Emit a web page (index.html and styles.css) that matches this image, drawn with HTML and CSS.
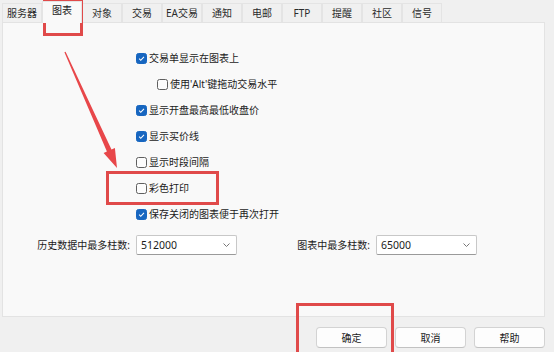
FILE: index.html
```html
<!DOCTYPE html>
<html>
<head>
    <meta charset="utf-8" />
    <title>图表设置</title>
    <link rel="stylesheet" href="styles.css">
</head>
<body>
    <section class="window">
        <nav class="tabs">
            <span class="tab">服务器</span>
            <span class="tab active">图表</span>
            <span class="tab">对象</span>
            <span class="tab">交易</span>
            <span class="tab">EA交易</span>
            <span class="tab">通知</span>
            <span class="tab">电邮</span>
            <span class="tab">FTP</span>
            <span class="tab">提醒</span>
            <span class="tab">社区</span>
            <span class="tab">信号</span>
        </nav>
        <section class="panel">
            <div class="options">
                <label class="row"><span class="box checked"><svg viewBox="0 0 11 11"><path d="M2.6 5.7 L4.6 7.7 L8.5 3.6" /></svg></span>交易单显示在图表上</label>
                <label class="row sub"><span class="box"></span>使用'Alt'键拖动交易水平</label>
                <label class="row"><span class="box checked"><svg viewBox="0 0 11 11"><path d="M2.6 5.7 L4.6 7.7 L8.5 3.6" /></svg></span>显示开盘最高最低收盘价</label>
                <label class="row"><span class="box checked"><svg viewBox="0 0 11 11"><path d="M2.6 5.7 L4.6 7.7 L8.5 3.6" /></svg></span>显示买价线</label>
                <label class="row"><span class="box"></span>显示时段间隔</label>
                <label class="row"><span class="box"></span>彩色打印</label>
                <label class="row"><span class="box checked"><svg viewBox="0 0 11 11"><path d="M2.6 5.7 L4.6 7.7 L8.5 3.6" /></svg></span>保存关闭的图表便于再次打开</label>
            </div>
            <div class="fields">
                <div class="field">
                    <span class="field-label wide">历史数据中最多柱数:</span>
                    <div class="combo">512000<svg viewBox="0 0 7 4"><path d="M0.5 0.5 L3.5 3.5 L6.5 0.5" /></svg></div>
                </div>
                <div class="field second">
                    <span class="field-label">图表中最多柱数:</span>
                    <div class="combo">65000<svg viewBox="0 0 7 4"><path d="M0.5 0.5 L3.5 3.5 L6.5 0.5" /></svg></div>
                </div>
            </div>
        </section>
        <div class="buttons">
            <button class="btn">确定</button>
            <button class="btn">取消</button>
            <button class="btn">帮助</button>
        </div>

        <!-- annotations drawn over the dialog -->
        <div class="mark mark-tab"></div>
        <div class="mark mark-print"></div>
        <div class="mark mark-ok"></div>
        <svg class="arrow" viewBox="0 0 554 352">
            <polygon points="65.6,51.8 111.5,149.5 114.9,148 117,168 103.6,153.1 106.9,151.6 64.4,52.2" />
        </svg>
    </section>
</body>
</html>
```

FILE: styles.css
```css
*{
    padding:0;
    margin:0;
    box-sizing:border-box;
}
html, body{
    width:554px;
    height:352px;
    overflow:hidden;
    background:#f0f0f0;
}
body{
    font:10px/1.2 "Noto Sans", "Noto Sans CJK SC", sans-serif;
    color:#1b1b1b;
}
.window{
    position:relative;
    height:352px;
    padding:0 9px 0 2px;
}

/* tabs */
.tabs{
    display:flex;
    align-items:flex-end;
    height:22px;
}
.tab{
    width:40px;
    height:19px;
    border:1px solid #e4e4e4;
    border-bottom:none;
    background:#f0f0f0;
    color:#2b2b2b;
    text-align:center;
    line-height:18px;
}
.tab + .tab{
    margin-left:0;
}
.tab.active{
    position:relative;
    z-index:1;
    height:22px;
    margin-bottom:-1px;
    background:#f9f9f9;
    line-height:17px;
    color:#1b1b1b;
}

/* panel */
.panel{
    height:295px;
    border:1px solid #e3e3e3;
    background:#f9f9f9;
}
.options{
    padding:22px 0 0 133px;
}
.row{
    display:flex;
    align-items:center;
    gap:2px;
    height:26px;
    white-space:nowrap;
}
.row.sub{
    padding-left:21px;
}
.box{
    width:11px;
    height:11px;
    border:1px solid #5f5f5f;
    border-radius:2.5px;
    background:#fcfcfc;
    flex:none;
}
.box.checked{
    border-color:#1766c0;
    background:#1766c0;
}
.box svg{
    display:block;
    width:9px;
    height:9px;
    margin:0 0 0 0;
}
.box svg path{
    fill:none;
    stroke:#fff;
    stroke-width:1.3;
}

.fields{
    display:flex;
    padding:8px 0 0 33px;
}
.field{
    display:flex;
    align-items:center;
    gap:6px;
}
.field.second{
    margin-left:60px;
}
.field-label{
    width:73px;
    text-align:right;
    white-space:nowrap;
}
.field-label.wide{
    width:94px;
}
.combo{
    display:flex;
    align-items:center;
    justify-content:space-between;
    width:101px;
    height:20px;
    padding:0 6px 0 4px;
    border:1px solid #c8c8c8;
    border-bottom-color:#9a9a9a;
    border-radius:2px;
    background:#fff;
    font-size:10.5px;
}
.combo svg{
    width:7px;
    height:4px;
}
.combo svg path{
    fill:none;
    stroke:#777;
    stroke-width:1;
}

/* buttons */
.buttons{
    display:flex;
    justify-content:flex-end;
    gap:8px;
    margin-top:10px;
    padding-right:0;
}
.btn{
    width:71px;
    height:21px;
    border:1px solid #d3d3d3;
    border-bottom-color:#c2c2c2;
    border-radius:4px;
    background:#fdfdfd;
    font:10px "Noto Sans", "Noto Sans CJK SC", sans-serif;
    color:#1b1b1b;
}

/* red annotations */
.mark{
    position:absolute;
    border:3px solid #e04a4a;
    pointer-events:none;
}
.mark-tab{
    left:43px;
    top:0;
    width:40px;
    height:36px;
}
.mark-print{
    left:106px;
    top:171px;
    width:113px;
    height:34px;
}
.mark-ok{
    left:296px;
    top:303px;
    width:98px;
    height:56px;
}
.arrow{
    position:absolute;
    left:0;
    top:0;
    width:554px;
    height:352px;
    pointer-events:none;
}
.arrow polygon{
    fill:#e8474a;
}
```
